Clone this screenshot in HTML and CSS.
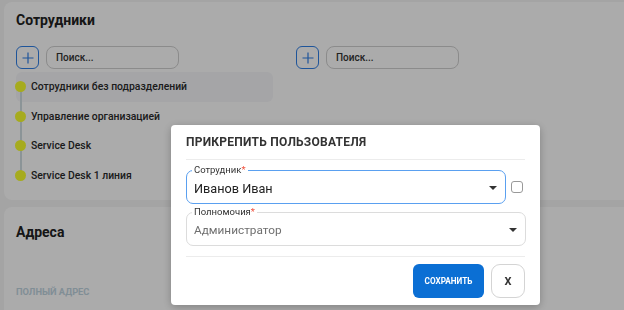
FILE: index.html
```html
<!DOCTYPE html>
<html lang="ru">
<head>
    <meta charset="UTF-8">
    <meta name="viewport" content="width=device-width, initial-scale=1.0">
    <title>Сотрудники</title>
    <link rel="stylesheet" href="styles.css">
</head>
<body>
    <div class="page">
        <section class="card card-staff">
            <h2 class="card-title">Сотрудники</h2>
            <div class="toolbar">
                <div class="tool-group">
                    <button class="add-btn">
                        <svg width="12" height="12" viewBox="0 0 12 12"><path d="M6 0.5v11M0.5 6h11" stroke="currentColor" stroke-width="1.2" fill="none"/></svg>
                    </button>
                    <div class="search">Поиск...</div>
                </div>
                <div class="tool-group">
                    <button class="add-btn">
                        <svg width="12" height="12" viewBox="0 0 12 12"><path d="M6 0.5v11M0.5 6h11" stroke="currentColor" stroke-width="1.2" fill="none"/></svg>
                    </button>
                    <div class="search">Поиск...</div>
                </div>
            </div>
            <ul class="tree">
                <li class="tree-item active">Сотрудники без подразделений</li>
                <li class="tree-item">Управление организацией</li>
                <li class="tree-item">Service Desk</li>
                <li class="tree-item">Service Desk 1 линия</li>
            </ul>
        </section>
        <section class="card card-address">
            <h2 class="card-title">Адреса</h2>
            <div class="col-head">Полный адрес</div>
        </section>
    </div>

    <div class="overlay"></div>

    <div class="modal">
        <div class="modal-header">Прикрепить пользователя</div>
        <div class="modal-body">
            <div class="field-row">
                <div class="field focused">
                    <span class="field-label">Сотрудник<i>*</i></span>
                    <span class="field-value">Иванов Иван</span>
                    <span class="caret"></span>
                </div>
                <span class="checkbox"></span>
            </div>
            <div class="field">
                <span class="field-label">Полномочия<i>*</i></span>
                <span class="field-value muted">Администратор</span>
                <span class="caret"></span>
            </div>
        </div>
        <div class="modal-footer">
            <button class="btn-save">Сохранить</button>
            <button class="btn-close">X</button>
        </div>
    </div>
</body>
</html>
```

FILE: styles.css
```css
* {
    box-sizing: border-box;
}
body {
    margin: 0;
    background-color: #f5f5f5;
    font-family: Roboto, "Liberation Sans", Arial, sans-serif;
    color: #222;
    height: 310px;
    overflow: hidden;
}
.page {
    padding: 2px 0 0 4px;
}
.card {
    background: #fff;
    border-radius: 8px 0 0 8px;
    padding: 8px 12px;
}
.card-staff {
    height: 198px;
}
.card-address {
    margin-top: 7px;
    height: 103px;
    padding-top: 15px;
    border-radius: 8px 0 0 0;
}
.card-title {
    margin: 0;
    font-size: 14px;
    line-height: 20px;
    font-weight: 700;
    color: #222;
}
.toolbar {
    display: grid;
    grid-template-columns: 280px 280px;
    margin-top: 16px;
}
.tool-group {
    display: flex;
    gap: 7px;
}
.add-btn {
    width: 23px;
    height: 23px;
    padding: 0;
    border: 1.5px solid #2f7fe6;
    border-radius: 6px;
    background: #fff;
    color: #2f7fe6;
    display: flex;
    align-items: center;
    justify-content: center;
}
.search {
    width: 133px;
    height: 23px;
    border: 1px solid #d0d0d0;
    border-radius: 8px;
    font-size: 10px;
    font-weight: 500;
    line-height: 21px;
    padding-left: 9px;
    color: #333;
}
.tree {
    list-style: none;
    margin: 3px 0 0;
    padding: 0;
    width: 257px;
}
.tree-item {
    position: relative;
    height: 29.5px;
    line-height: 29px;
    padding-left: 15px;
    font-size: 10.4px;
    font-weight: 500;
    color: #2a2a2a;
    border-radius: 6px;
}
.tree-item.active {
    background: #f6f7fa;
}
.tree-item::before {
    content: "";
    position: absolute;
    left: -1px;
    top: 9px;
    width: 11px;
    height: 11px;
    border-radius: 50%;
    background: #f8ff2e;
    z-index: 1;
}
.tree-item::after {
    content: "";
    position: absolute;
    left: 3.5px;
    top: 14px;
    width: 2px;
    height: 30px;
    background: #cfdde2;
}
.tree-item:last-child::after {
    display: none;
}
.col-head {
    margin-top: 44px;
    font-size: 9.3px;
    font-weight: 700;
    text-transform: uppercase;
    color: #bfd4df;
}
.overlay {
    position: fixed;
    inset: 0;
    background: rgba(0, 0, 0, 0.33);
    z-index: 10;
}
.modal {
    position: fixed;
    left: 171px;
    top: 125px;
    width: 369px;
    background: #fff;
    border-radius: 4px;
    padding: 0 15px 7px;
    box-shadow: 0 2px 8px rgba(0, 0, 0, 0.25);
    z-index: 11;
}
.modal-header {
    padding: 8px 0;
    border-bottom: 1px solid #ececec;
    font-size: 12px;
    line-height: 18px;
    font-weight: 700;
    letter-spacing: 0.25px;
    text-transform: uppercase;
    color: #333;
}
.modal-body {
    padding: 10px 0 10px;
    border-bottom: 1px solid #ececec;
    display: flex;
    flex-direction: column;
    gap: 8px;
}
.field-row {
    display: flex;
    align-items: center;
    gap: 5px;
}
.field {
    position: relative;
    width: 340px;
    height: 34px;
    border: 1px solid #dcdcdc;
    border-radius: 7px;
    display: flex;
    align-items: center;
    padding: 2px 7px 0;
}
.field-row .field {
    width: 320px;
}
.field.focused {
    border-color: #5aa0f0;
}
.field-label {
    position: absolute;
    left: 5px;
    top: -7px;
    padding: 0 2px;
    background: #fff;
    font-size: 9.5px;
    line-height: 12px;
    color: #333;
}
.field-label i {
    font-style: normal;
    color: #f0503c;
}
.field-value {
    flex: 1;
    font-size: 12.7px;
    color: #222;
}
.field-value.muted {
    color: #6f6f6f;
    font-size: 11.8px;
}
.caret {
    width: 0;
    height: 0;
    border-left: 4px solid transparent;
    border-right: 4px solid transparent;
    border-top: 4.5px solid #333;
    margin-right: 1px;
}
.checkbox {
    width: 12px;
    height: 12px;
    border: 1px solid #999;
    border-radius: 3px;
}
.modal-footer {
    display: flex;
    justify-content: flex-end;
    gap: 7px;
    padding-top: 7px;
}
.btn-save {
    width: 71px;
    height: 34px;
    border: none;
    border-radius: 6px;
    background: #0b6fd4;
    color: #fff;
    font-family: inherit;
    font-size: 8.2px;
    font-weight: 700;
    text-transform: uppercase;
}
.btn-close {
    width: 34px;
    height: 34px;
    border: 1px solid #d4d4d4;
    border-radius: 9px;
    background: #fff;
    color: #333;
    font-family: inherit;
    font-size: 11px;
    font-weight: 700;
}
```
